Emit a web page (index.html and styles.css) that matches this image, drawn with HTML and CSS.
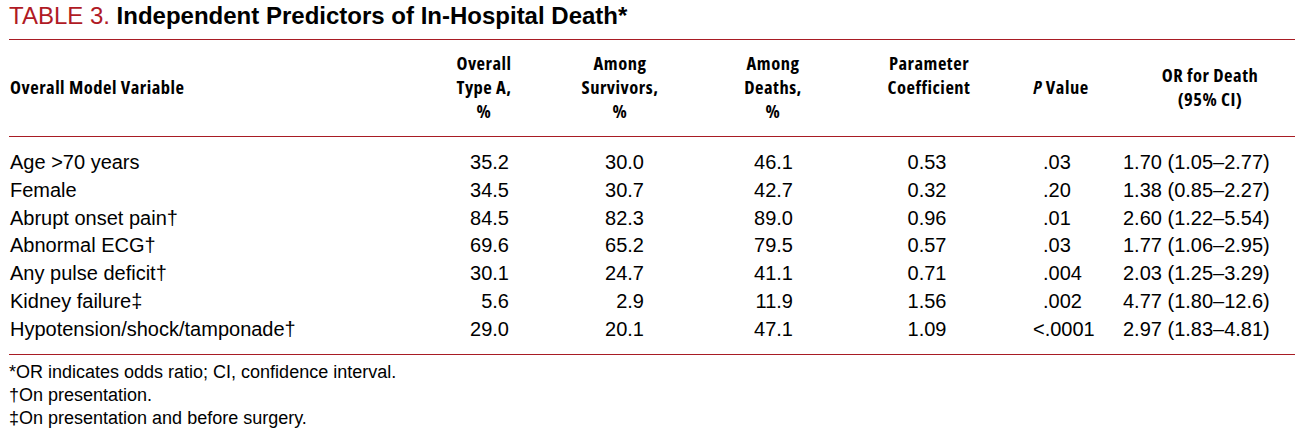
FILE: index.html
```html
<!DOCTYPE html>
<html lang="en">
<head>
<meta charset="utf-8">
<title>Table 3</title>
<link rel="stylesheet" href="styles.css">
</head>
<body>
<div class="page">
  <h1 class="title"><span class="label">TABLE 3.</span> <span class="name">Independent Predictors of In-Hospital Death*</span></h1>
  <div class="tbl">
    <div class="row head">
      <div class="cell c0 mid">Overall Model Variable</div>
      <div class="cell c1">Overall<br>Type A,<br>%</div>
      <div class="cell c2">Among<br>Survivors,<br>%</div>
      <div class="cell c3">Among<br>Deaths,<br>%</div>
      <div class="cell c4 top">Parameter<br>Coefficient</div>
      <div class="cell c5 mid"><i>P</i> Value</div>
      <div class="cell c6 mid">OR for Death<br>(95% CI)</div>
    </div>
    <div class="body">
      <div class="row">
        <div class="cell c0">Age &gt;70 years</div>
        <div class="cell c1">35.2</div>
        <div class="cell c2">30.0</div>
        <div class="cell c3">46.1</div>
        <div class="cell c4">0.53</div>
        <div class="cell c5">.03</div>
        <div class="cell c6">1.70 (1.05–2.77)</div>
      </div>
      <div class="row">
        <div class="cell c0">Female</div>
        <div class="cell c1">34.5</div>
        <div class="cell c2">30.7</div>
        <div class="cell c3">42.7</div>
        <div class="cell c4">0.32</div>
        <div class="cell c5">.20</div>
        <div class="cell c6">1.38 (0.85–2.27)</div>
      </div>
      <div class="row">
        <div class="cell c0">Abrupt onset pain†</div>
        <div class="cell c1">84.5</div>
        <div class="cell c2">82.3</div>
        <div class="cell c3">89.0</div>
        <div class="cell c4">0.96</div>
        <div class="cell c5">.01</div>
        <div class="cell c6">2.60 (1.22–5.54)</div>
      </div>
      <div class="row">
        <div class="cell c0">Abnormal ECG†</div>
        <div class="cell c1">69.6</div>
        <div class="cell c2">65.2</div>
        <div class="cell c3">79.5</div>
        <div class="cell c4">0.57</div>
        <div class="cell c5">.03</div>
        <div class="cell c6">1.77 (1.06–2.95)</div>
      </div>
      <div class="row">
        <div class="cell c0">Any pulse deficit†</div>
        <div class="cell c1">30.1</div>
        <div class="cell c2">24.7</div>
        <div class="cell c3">41.1</div>
        <div class="cell c4">0.71</div>
        <div class="cell c5">.004</div>
        <div class="cell c6">2.03 (1.25–3.29)</div>
      </div>
      <div class="row">
        <div class="cell c0">Kidney failure‡</div>
        <div class="cell c1">5.6</div>
        <div class="cell c2">2.9</div>
        <div class="cell c3">11.9</div>
        <div class="cell c4">1.56</div>
        <div class="cell c5">.002</div>
        <div class="cell c6">4.77 (1.80–12.6)</div>
      </div>
      <div class="row">
        <div class="cell c0">Hypotension/shock/tamponade†</div>
        <div class="cell c1">29.0</div>
        <div class="cell c2">20.1</div>
        <div class="cell c3">47.1</div>
        <div class="cell c4">1.09</div>
        <div class="cell c5"><span class="lt">&lt;</span>.0001</div>
        <div class="cell c6">2.97 (1.83–4.81)</div>
      </div>
    </div>
  </div>
  <div class="notes">
    <p>*OR indicates odds ratio; CI, confidence interval.</p>
    <p>†On presentation.</p>
    <p>‡On presentation and before surgery.</p>
  </div>
</div>
</body>
</html>
```

FILE: styles.css
```css
html, body {
  margin: 0;
  padding: 0;
  background: #ffffff;
}

.page {
  padding: 0 6px 0 9px;
  font-family: "Liberation Sans", Arial, sans-serif;
  color: #000;
}

.title {
  margin: 0;
  padding: 2px 0 9px 0;
  font-size: 24px;
  line-height: 28px;
  font-weight: normal;
  white-space: nowrap;
}

.title .label {
  color: #b01a25;
}

.title .name {
  font-weight: bold;
}

.tbl {
  border-top: 1px solid #a81c24;
  border-bottom: 1px solid #a81c24;
}

.row {
  display: grid;
  grid-template-columns: 431px 88px 184px 122px 190px 74px 197px;
}

.head {
  padding: 11px 0 13px 0;
  border-bottom: 1px solid #a81c24;
  font-family: "Open Sans", "Liberation Sans", sans-serif;
  font-stretch: 75%;
  font-weight: 700;
  font-size: 18.5px;
  letter-spacing: 0.5px;
  line-height: 24px;
  white-space: nowrap;
}

.head .cell {
  text-align: center;
  align-self: start;
}

.head .cell.mid {
  align-self: center;
}

.head .cell.c0 {
  text-align: left;
  padding-left: 1px;
}

.head .cell.c6 {
  padding-left: 27px;
}

.body {
  padding: 12px 0 10px 0;
  font-size: 20px;
}

.body .row {
  height: 27.8px;
  line-height: 27.8px;
  white-space: nowrap;
}

.body .c0 {
  padding-left: 1px;
}

.body .c1 {
  text-align: right;
  padding-right: 19px;
}

.body .c2 {
  text-align: right;
  padding-right: 68px;
}

.body .c3 {
  text-align: right;
  padding-right: 41px;
}

.body .c4 {
  text-align: center;
  padding-right: 4px;
}

.body .c5 {
  text-align: left;
  padding-left: 19px;
}

.body .c5 .lt {
  margin-left: -10px;
}

.body .c6 {
  text-align: left;
  padding-left: 25px;
}

.notes {
  padding-top: 6px;
  font-size: 18px;
  line-height: 23.3px;
}

.notes p {
  margin: 0;
}
```
